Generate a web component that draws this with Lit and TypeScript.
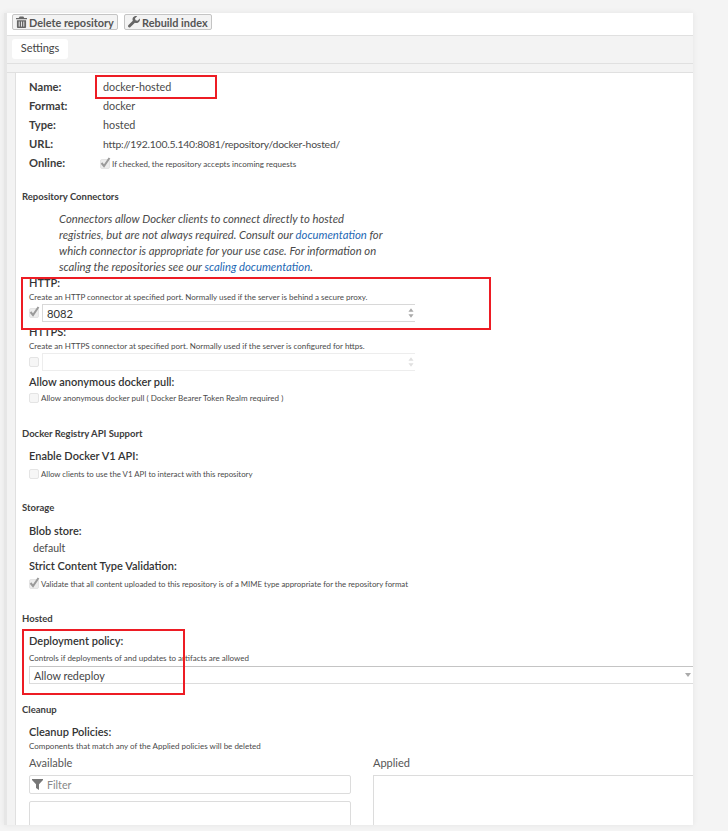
import { LitElement, html, css, svg } from "lit";
import { customElement } from "lit/decorators.js";

const trash = svg`<svg class="ico" viewBox="0 0 12 13" width="11" height="12"><path fill="#666" d="M4 0.500h4l1 1.500h3v1.500H0V2h3zM1 4.500h10v7.500a1 1 0 0 1-1 1H2a1 1 0 0 1-1-1z"/><path stroke="#f0f0f0" stroke-width="1" d="M3.500 6v5.500M6 6v5.500M8.500 6v5.500"/></svg>`;
const wrench = svg`<svg class="ico" viewBox="0 0 12 12" width="12" height="12"><path fill="#666" d="M11.800 2.600 9.600 4.800 7.500 4.300 7 2.200 9.200 0.200C7.600-.3 5.800.2 5 1.600 4.400 2.600 4.400 3.800 4.800 4.800L.5 9.100a1.400 1.400 0 0 0 0 2 1.400 1.400 0 0 0 2 0L6.900 6.800c1.500.6 3.200.2 4.200-1 .8-.9 1-2.200.7-3.200z"/></svg>`;
const funnel = svg`<svg viewBox="0 0 11 11" width="11" height="11"><path fill="#777" d="M0 0h11v1L7 5.200V11L4 9V5.200L0 1z"/></svg>`;
const tick = svg`<svg class="tk" viewBox="0 0 11 11" width="11" height="11"><path fill="none" stroke="#9a9a9a" stroke-width="2" d="M1.500 6 4 9 9.500 1"/></svg>`;
const spin = svg`<svg viewBox="0 0 7 11" width="6" height="10"><path fill="currentColor" d="M3.500 0 6.500 4H.5zM.5 7h6l-3 4z"/></svg>`;

@customElement("app-root")
export class AppRoot extends LitElement {
  static styles = css`
    :host { display: block; width: 728px; height: 831px; background: #f4f4f4; overflow: hidden;
      font-family: "Lato", "Open Sans", sans-serif; color: #3a3a3a; }
    .panel { position: relative; box-sizing: border-box; margin: 13px 0 0 4px; width: 689px; height: 812px; background: #fff;
      border-left: 3px solid #e6e6e6; box-shadow: 0 0 6px rgba(0,0,0,.07); overflow: hidden; }
    .accent { position: absolute; left: -3px; top: 15px; width: 3px; height: 29px; background: #2fb57d; }
    .toolbar { height: 23px; box-sizing: border-box; border-bottom: 1px solid #e0e0e0; padding: 1px 0 0 5px; display: flex; gap: 6px; align-items: flex-start; }
    .btn { height: 16px; box-sizing: border-box; border: 1px solid #c4c4c4; border-radius: 2px; background: #f3f3f3; display: flex; align-items: center; gap: 2px; padding: 0 3px; font-size: 10.900px; font-weight: 700; color: #555; white-space: nowrap; }
    .btn.d { width: 106px; }
    .btn.r { width: 88px; }
    .ico { display: block; flex: none; }
    .tabs { height: 28px; box-sizing: border-box; background: #f3f3f3; border-bottom: 1px solid #e0e0e0; padding: 3px 0 0 5px; display: flex; }
    .tab { height: 20px; width: 56px; box-sizing: border-box; background: #fff; border-radius: 3px; font-size: 11px; text-align: center; line-height: 18px; color: #444; }
    .gap { height: 9px; box-sizing: border-box; background: #f3f3f3; border-bottom: 1px solid #e0e0e0; }
    .wrap { display: flex; height: 752px; background: #f3f3f3; padding-left: 8px; }
    .body { flex: 1; background: #fff; border-left: 1px solid #e0e0e0; padding-left: 6px; position: relative; overflow: hidden; }
    .rows { display: grid; grid-template-columns: 74px 1fr; padding: 5px 0 0 7px; }
    .k { font-size: 11.200px; font-weight: 700; height: 19px; line-height: 18px; color: #3c3c3c; }
    .v { font-size: 10.800px; height: 19px; line-height: 18px; color: #4a4a4a; white-space: nowrap; }
    .url { font-size: 10.400px; letter-spacing: -0.22px; }
    .cbrow { display: flex; align-items: center; gap: 2px; font-size: 8.050px; color: #4a4a4a; white-space: nowrap; height: 14px; }
    .cbrow.tight { font-size: 7.840px; }
    .online { height: 20px; margin-left: -3px; }
    .cb { width: 10px; height: 10px; box-sizing: border-box; border: 1px solid #e4e4e4; border-radius: 2px; background: #f6f6f6; flex: none; position: relative; }
    .cb.on { background: #ececec; }
    .tk { position: absolute; left: -1px; top: -3px; display: block; }
    .h { font-size: 9.500px; font-weight: 700; color: #3c3c3c; white-space: nowrap; line-height: 12px; }
    .note { font-size: 11.300px; font-style: italic; line-height: 16px; color: #4a4a4a; margin: 8px 0 0 37px; white-space: nowrap; }
    .note a { color: #2468b4; text-decoration: none; }
    .f { margin-left: 7px; }
    .l { font-size: 11px; font-weight: 600; line-height: 14px; color: #333; white-space: nowrap; }
    .hint { font-size: 8px; line-height: 11px; color: #4a4a4a; white-space: nowrap; }
    .port { display: flex; align-items: center; gap: 3px; height: 18px; }
    .num { width: 373px; height: 18px; box-sizing: border-box; border: 1px solid #d8d8d8; border-right: 0; display: flex; align-items: center; justify-content: space-between; padding: 0 1px 0 4px; font-size: 11.200px; color: #333; }
    .num svg { display: block; color: #aaa; margin-left: auto; }
    .num.off { border-color: #ededed; }
    .num.off svg { color: #e0e0e0; }
    .select { height: 18px; box-sizing: border-box; border-top: 1px solid #c4c4c4; border-bottom: 1px solid #dcdcdc; border-left: 1px solid #dcdcdc; margin-top: 2px; display: flex; align-items: center; justify-content: space-between; padding: 0 2px 0 4px; font-size: 10.800px; color: #444; }
    .arrow { width: 0; height: 0; border-left: 3px solid transparent; border-right: 3px solid transparent; border-top: 4px solid #aaa; }
    .blob { font-size: 10.500px; height: 15px; line-height: 15px; padding-left: 4px; color: #4a4a4a; }
    .cols { display: flex; gap: 22px; margin-top: 4px; }
    .cols > div { width: 322px; flex: none; }
    .coltitle { font-size: 11px; line-height: 14px; color: #555; }
    .filter { margin-top: 5px; height: 19px; box-sizing: border-box; border: 1px solid #dcdcdc; border-radius: 2px; display: flex; align-items: center; gap: 4px; padding-left: 2px; font-size: 10.700px; color: #888; }
    .list { margin-top: 7px; height: 60px; box-sizing: border-box; border: 1px solid #dcdcdc; border-radius: 2px; }
    .applied { margin-top: 5px; height: 90px; box-sizing: border-box; border: 1px solid #dcdcdc; border-right: 0; }
    .redbox { position: absolute; border: 2px solid #ed1c24; box-sizing: border-box; pointer-events: none; }
    .mt1 { margin-top: 1px; } .mt2 { margin-top: 2px; } .mt3 { margin-top: 3px; } .mt4 { margin-top: 4px; } .mt5 { margin-top: 5px; }
    .mt9 { margin-top: 9px; } .mt10 { margin-top: 10px; } .mt18 { margin-top: 18px; } .mt20 { margin-top: 20px; }
    .mt21 { margin-top: 21px; } .mt22 { margin-top: 22px; } .mt23 { margin-top: 23px; }
    .box-name { left: 88px; top: 62px; width: 122px; height: 24px; }
    .box-http { left: 14px; top: 264px; width: 470px; height: 53px; }
    .box-dep { left: 15px; top: 616px; width: 163px; height: 66px; }
  `;

  private cb(on: boolean) {
    return html`<span class="cb ${on ? "on" : ""}">${on ? tick : ""}</span>`;
  }

  render() {
    return html`
      <div class="panel">
        <div class="accent"></div>
        <div class="toolbar">
          <div class="btn d">${trash}Delete repository</div>
          <div class="btn r">${wrench}Rebuild index</div>
        </div>
        <div class="tabs"><div class="tab">Settings</div></div>
        <div class="gap"></div>
        <div class="wrap"><div class="body">
          <div class="rows">
            <div class="k">Name:</div><div class="v">docker-hosted</div>
            <div class="k">Format:</div><div class="v">docker</div>
            <div class="k">Type:</div><div class="v">hosted</div>
            <div class="k">URL:</div><div class="v url">http://192.100.5.140:8081/repository/docker-hosted/</div>
            <div class="k">Online:</div><div class="v"><div class="cbrow online">${this.cb(true)}If checked, the repository accepts incoming requests</div></div>
          </div>
          <div class="h mt18">Repository Connectors</div>
          <div class="note">
            <div>Connectors allow Docker clients to connect directly to hosted</div>
            <div>registries, but are not always required. Consult our <a>documentation</a> for</div>
            <div>which connector is appropriate for your use case. For information on</div>
            <div>scaling the repositories see our <a>scaling documentation</a>.</div>
          </div>
          <div class="f mt1">
            <div class="l">HTTP:</div>
            <div class="hint mt2">Create an HTTP connector at specified port. Normally used if the server is behind a secure proxy.</div>
            <div class="port mt1">${this.cb(true)}<div class="num">8082${spin}</div></div>
            <div class="l mt3">HTTPS:</div>
            <div class="hint mt2">Create an HTTPS connector at specified port. Normally used if the server is configured for https.</div>
            <div class="port mt1">${this.cb(false)}<div class="num off">${spin}</div></div>
            <div class="l mt4">Allow anonymous docker pull:</div>
            <div class="cbrow mt2">${this.cb(false)}Allow anonymous docker pull ( Docker Bearer Token Realm required )</div>
          </div>
          <div class="h mt23">Docker Registry API Support</div>
          <div class="f mt9">
            <div class="l">Enable Docker V1 API:</div>
            <div class="cbrow tight mt4">${this.cb(false)}Allow clients to use the V1 API to interact with this repository</div>
          </div>
          <div class="h mt21">Storage</div>
          <div class="f mt10">
            <div class="l">Blob store:</div>
            <div class="blob mt3">default</div>
            <div class="l mt3">Strict Content Type Validation:</div>
            <div class="cbrow tight mt4">${this.cb(true)}Validate that all content uploaded to this repository is of a MIME type appropriate for the repository format</div>
          </div>
          <div class="h mt22">Hosted</div>
          <div class="f mt9">
            <div class="l">Deployment policy:</div>
            <div class="hint mt5">Controls if deployments of and updates to artifacts are allowed</div>
            <div class="select">Allow redeploy<span class="arrow"></span></div>
          </div>
          <div class="h mt20">Cleanup</div>
          <div class="f mt9">
            <div class="l">Cleanup Policies:</div>
            <div class="hint mt2">Components that match any of the Applied policies will be deleted</div>
            <div class="cols">
              <div><div class="coltitle">Available</div><div class="filter">${funnel}Filter</div><div class="list"></div></div>
              <div><div class="coltitle">Applied</div><div class="applied"></div></div>
            </div>
          </div>
        </div></div>
        <div class="redbox box-name"></div>
        <div class="redbox box-http"></div>
        <div class="redbox box-dep"></div>
      </div>
    `;
  }
}
